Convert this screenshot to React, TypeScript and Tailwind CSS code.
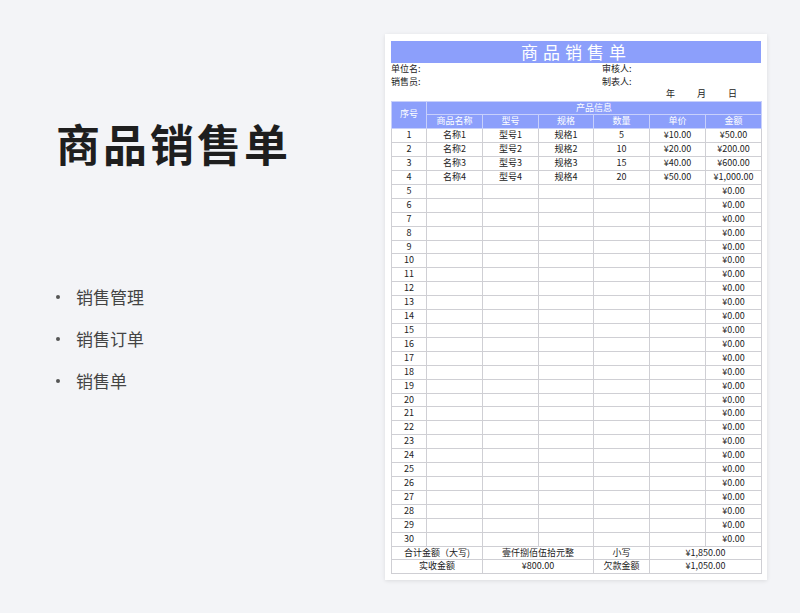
import React from "react";

const cols = ["w-[35px]", "w-[56px]", "w-[56px]", "w-[55px]", "w-[56px]", "w-[56px]", "w-[56px]"];
const data = [
  ["名称1", "型号1", "规格1", "5", "¥10.00", "¥50.00"],
  ["名称2", "型号2", "规格2", "10", "¥20.00", "¥200.00"],
  ["名称3", "型号3", "规格3", "15", "¥40.00", "¥600.00"],
  ["名称4", "型号4", "规格4", "20", "¥50.00", "¥1,000.00"],
];
const td = "border border-[#cfcfd4] h-[13.9px] p-0 leading-[12.9px] text-center";
const th = "border border-[#c8d0fb] h-[13.9px] p-0 leading-[12.9px] text-center font-normal";

export default function App() {
  const rows = Array.from({ length: 30 }, (_, i) => i + 1);
  return (
    <div className="w-[800px] h-[613px] bg-[#f3f4f7] flex" style={{ fontFamily: '"Noto Sans CJK SC", "Noto Sans", sans-serif' }}>
      <div className="w-[385px] pl-[56px] pt-[113px]">
        <h1 className="text-[44px] font-bold text-[#1e1e1e] leading-[60px] tracking-[3px]">商品销售单</h1>
        <ul className="mt-[111px] flex flex-col gap-[17px]">
          {["销售管理", "销售订单", "销售单"].map((t) => (
            <li key={t} className="flex items-center text-[17px] text-[#444] leading-[25px]">
              <span className="w-[4px] h-[4px] rounded-full bg-[#555] mr-[16px]" />
              {t}
            </li>
          ))}
        </ul>
      </div>
      <div className="mt-[34px] w-[382px] h-[546px] bg-white shadow-[0_1px_4px_rgba(0,0,0,0.1)] px-[6px] pt-[7px] text-[9px] text-[#222]">
        <div className="h-[22px] bg-[#8c9ffb] text-white text-center text-[17px] leading-[22px] tracking-[5px]">商品销售单</div>
        <div className="flex h-[12.5px] leading-[12.5px]"><span className="w-[211px]">单位名:</span><span>审核人:</span></div>
        <div className="flex h-[12.5px] leading-[12.5px]"><span className="w-[211px]">销售员:</span><span>制表人:</span></div>
        <div className="flex h-[12.5px] leading-[12.5px] justify-end pr-[24px] gap-[22px]"><span>年</span><span>月</span><span>日</span></div>
        <table className="border-collapse table-fixed w-[370px]">
          <colgroup>{cols.map((c, i) => <col key={i} className={c} />)}</colgroup>
          <thead className="bg-[#8c9ffb] text-white">
            <tr>
              <th rowSpan={2} className={th}>序号</th>
              <th colSpan={6} className={th}>产品信息</th>
            </tr>
            <tr>
              {["商品名称", "型号", "规格", "数量", "单价", "金额"].map((h) => <th key={h} className={th}>{h}</th>)}
            </tr>
          </thead>
          <tbody>
            {rows.map((n) => {
              const d = data[n - 1];
              return (
                <tr key={n}>
                  <td className={td}>{n}</td>
                  {d ? d.map((v, j) => <td key={j} className={td}>{v}</td>) : (
                    <>
                      <td className={td}></td><td className={td}></td><td className={td}></td><td className={td}></td><td className={td}></td>
                      <td className={td}>¥0.00</td>
                    </>
                  )}
                </tr>
              );
            })}
            <tr>
              <td colSpan={2} className={td}>合计金额（大写)</td>
              <td colSpan={2} className={td}>壹仟捌佰伍拾元整</td>
              <td className={td}>小写</td>
              <td colSpan={2} className={td}>¥1,850.00</td>
            </tr>
            <tr>
              <td colSpan={2} className={td}>实收金额</td>
              <td colSpan={2} className={td}>¥800.00</td>
              <td className={td}>欠款金额</td>
              <td colSpan={2} className={td}>¥1,050.00</td>
            </tr>
          </tbody>
        </table>
      </div>
    </div>
  );
}
